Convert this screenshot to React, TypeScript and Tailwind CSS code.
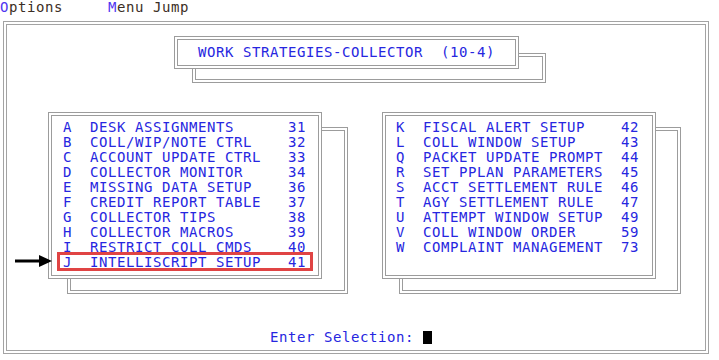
import React from "react";

const mono = { fontFamily: '"DejaVu Sans Mono", "Liberation Mono", monospace' };

const leftItems = [
  ["A", "DESK ASSIGNMENTS", "31"],
  ["B", "COLL/WIP/NOTE CTRL", "32"],
  ["C", "ACCOUNT UPDATE CTRL", "33"],
  ["D", "COLLECTOR MONITOR", "34"],
  ["E", "MISSING DATA SETUP", "36"],
  ["F", "CREDIT REPORT TABLE", "37"],
  ["G", "COLLECTOR TIPS", "38"],
  ["H", "COLLECTOR MACROS", "39"],
  ["I", "RESTRICT COLL CMDS", "40"],
  ["J", "INTELLISCRIPT SETUP", "41"],
];

const rightItems = [
  ["K", "FISCAL ALERT SETUP", "42"],
  ["L", "COLL WINDOW SETUP", "43"],
  ["Q", "PACKET UPDATE PROMPT", "44"],
  ["R", "SET PPLAN PARAMETERS", "45"],
  ["S", "ACCT SETTLEMENT RULE", "46"],
  ["T", "AGY SETTLEMENT RULE", "47"],
  ["U", "ATTEMPT WINDOW SETUP", "49"],
  ["V", "COLL WINDOW ORDER", "59"],
  ["W", "COMPLAINT MANAGEMENT", "73"],
];

function MenuRow({ item }: { item: string[] }) {
  return (
    <div className="flex h-[15px] leading-[15px] whitespace-pre">
      <span className="w-[27px]">{item[0]}</span>
      <span className="w-[198px]">{item[1]}</span>
      <span>{item[2]}</span>
    </div>
  );
}

function MenuBox({ items, pad, shadowLeft, shadowW, children }: { items: string[][]; pad: string; shadowLeft: string; shadowW: string; children?: React.ReactNode }) {
  return (
    <div className="relative w-[274px] h-[167px]">
      {/* shadow frame behind */}
      <div className={`absolute top-[15px] ${shadowLeft} ${shadowW} h-[167px] border-4 border-double border-[#9c9c9c]`} />
      <div className={`relative w-full h-full bg-white border-4 border-double border-[#9c9c9c] pt-[4px] ${pad}`}>
        {items.map(it => <MenuRow key={it[0]} item={it} />)}
      </div>
      {children}
    </div>
  );
}

export default function App() {
  return (
    <div className="w-[719px] h-[360px] bg-white text-[14px] tracking-[0.57px] text-[#2626e0] overflow-hidden" style={mono}>
      {/* top menu bar */}
      <div className="h-[21px] leading-[15px] whitespace-pre text-[#3b2e25]">
        <span className="text-[#4f35f0]">O</span>ptions     <span className="text-[#4f35f0]">M</span>enu Jump
      </div>

      <div className="ml-[3px] w-[706px] h-[333px] border-4 border-double border-[#a3a3a3]">
        {/* title */}
        <div className="relative ml-[167px] mt-[11px] w-[345px] h-[33px]">
          <div className="absolute left-[18px] top-[17px] w-[354px] h-[30px] border-4 border-double border-[#9c9c9c]" />
          <div className="relative w-full h-full bg-white border-4 border-double border-[#9c9c9c] pl-[20px] flex items-center whitespace-pre">
            WORK STRATEGIES-COLLECTOR  (10-4)
          </div>
        </div>

        {/* menus */}
        <div className="flex gap-[60px] ml-[41px] mt-[43px]">
          <MenuBox items={leftItems} pad="pl-[11px]" shadowLeft="left-[19px]" shadowW="w-[281px]">
            <div className="absolute left-[9px] top-[140px] w-[256px] h-[19px] border-[3px] border-[#e04444]" />
            <svg className="absolute left-[-33px] top-[143px]" width="38" height="12" viewBox="0 0 38 12">
              <line x1="0" y1="6" x2="28" y2="6" stroke="#000" strokeWidth="3" />
              <polygon points="24,0 37,6 24,12" fill="#000" />
            </svg>
          </MenuBox>
          <MenuBox items={rightItems} pad="pl-[10px]" shadowLeft="left-[17px]" shadowW="w-[282px]" />
        </div>

        {/* prompt */}
        <div className="ml-[263px] mt-[51px] h-[15px] leading-[15px] whitespace-pre flex items-center">
          <span>Enter Selection: </span>
          <span className="inline-block w-[9px] h-[13px] bg-black" />
        </div>
      </div>
    </div>
  );
}
